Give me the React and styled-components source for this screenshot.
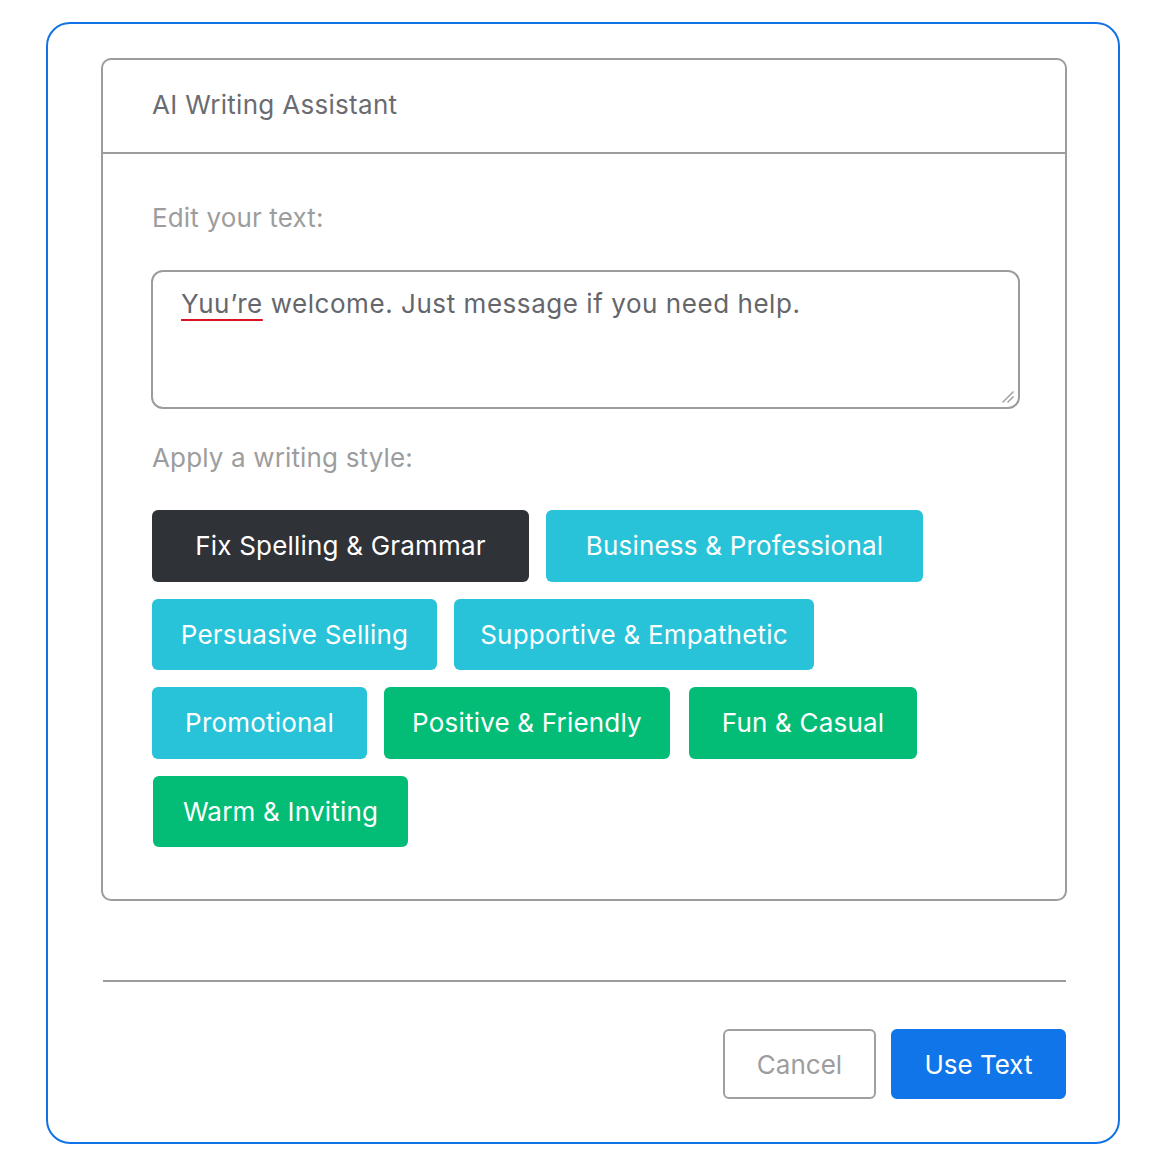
import React from "react";
import styled, { createGlobalStyle } from "styled-components";

const Global = createGlobalStyle`
  html, body { margin: 0; padding: 0; background: #ffffff; }
  body { font-family: Inter, "Noto Sans", "Liberation Sans", sans-serif; }
  * { box-sizing: border-box; }
`;

const Frame = styled.div`
  margin: 22px 47px 0 46px;
  border: 2px solid #1273e6;
  border-radius: 24px;
  padding: 34px 51px 43px 53px;
  display: flex;
  flex-direction: column;
`;

const Card = styled.section`
  border: 2px solid #9c9c9c;
  border-radius: 10px;
  display: flex;
  flex-direction: column;
`;

const CardHeader = styled.header`
  height: 94px;
  padding: 0 49px 3px;
  display: flex;
  align-items: center;
  border-bottom: 2px solid #9c9c9c;
  font-size: 26px;
  letter-spacing: 0.3px;
  color: #6b6c71;
`;

const CardBody = styled.div`
  padding: 48px 45px 52px 48px;
  display: flex;
  flex-direction: column;
`;

const Label = styled.div`
  font-size: 26px;
  letter-spacing: 0.15px;
  line-height: 32px;
  color: #9d9d9d;
  padding-left: 1px;
  margin-bottom: ${(p) => p.$gap}px;
`;

const TextBox = styled.div`
  position: relative;
  height: 139px;
  border: 2px solid #9c9c9c;
  border-radius: 12px;
  padding: 16px 28px;
  font-size: 26px;
  letter-spacing: 0.55px;
  line-height: 32px;
  color: #65666b;
  margin-bottom: 33px;
`;

const Misspelt = styled.span`
  text-decoration: underline;
  text-decoration-color: #d9141f;
  text-decoration-thickness: 2px;
  text-underline-offset: 6px;
`;

const Grip = styled.svg`
  position: absolute;
  right: 3px;
  bottom: 3px;
  width: 15px;
  height: 15px;
`;

const StyleList = styled.div`
  display: flex;
  flex-wrap: wrap;
  row-gap: 17px;
  column-gap: 17px;
  padding-left: 1px;
`;

const palette = {
  dark: "#2f3237",
  cyan: "#29c3d9",
  green: "#03bd77",
};

const StyleButton = styled.button`
  height: 71.5px;
  width: ${(p) => p.$w}px;
  border: none;
  border-radius: 6px;
  background: ${(p) => palette[p.$tone]};
  color: #ffffff;
  font-family: inherit;
  font-size: 26px;
  letter-spacing: 0.2px;
  padding: 0;
  margin-left: ${(p) => p.$ml || 0}px;
  display: flex;
  align-items: center;
  justify-content: center;
  cursor: pointer;
`;

const Divider = styled.hr`
  border: none;
  border-top: 2px solid #9c9c9c;
  margin: 79px 1px 0 2px;
  height: 0;
`;

const Footer = styled.div`
  display: flex;
  justify-content: flex-end;
  gap: 15px;
  margin-top: 47px;
  padding-right: 1px;
`;

const FooterButton = styled.button`
  height: 70px;
  width: ${(p) => p.$w}px;
  border-radius: 6px;
  font-family: inherit;
  font-size: 26px;
  cursor: pointer;
  border: 2px solid ${(p) => (p.$primary ? "#0f75e8" : "#a0a0a0")};
  background: ${(p) => (p.$primary ? "#0f75e8" : "#ffffff")};
  color: ${(p) => (p.$primary ? "#ffffff" : "#9d9d9d")};
`;

const styles = [
  { label: "Fix Spelling & Grammar", tone: "dark", w: 377 },
  { label: "Business & Professional", tone: "cyan", w: 377 },
  { label: "Persuasive Selling", tone: "cyan", w: 285 },
  { label: "Supportive & Empathetic", tone: "cyan", w: 360 },
  { label: "Promotional", tone: "cyan", w: 215 },
  { label: "Positive & Friendly", tone: "green", w: 286 },
  { label: "Fun & Casual", tone: "green", w: 228, ml: 2 },
  { label: "Warm & Inviting", tone: "green", w: 255, ml: 1 },
];

export default function App() {
  return (
    <>
      <Global />
      <Frame>
        <Card>
          <CardHeader>AI Writing Assistant</CardHeader>
          <CardBody>
            <Label $gap={36}>Edit your text:</Label>
            <TextBox>
              <Misspelt>Yuu’re</Misspelt> welcome. Just message if you need help.
              <Grip viewBox="0 0 15 15">
                <path d="M13.5 2.5 L2.5 13.5 M13.5 7.5 L7.5 13.5" stroke="#9a9a9a" strokeWidth="1.4" fill="none" />
              </Grip>
            </TextBox>
            <Label $gap={36}>Apply a writing style:</Label>
            <StyleList>
              {styles.map((s) => (
                <StyleButton key={s.label} $tone={s.tone} $w={s.w} $ml={s.ml}>
                  {s.label}
                </StyleButton>
              ))}
            </StyleList>
          </CardBody>
        </Card>
        <Divider />
        <Footer>
          <FooterButton $w={153}>Cancel</FooterButton>
          <FooterButton $w={175} $primary>Use Text</FooterButton>
        </Footer>
      </Frame>
    </>
  );
}
